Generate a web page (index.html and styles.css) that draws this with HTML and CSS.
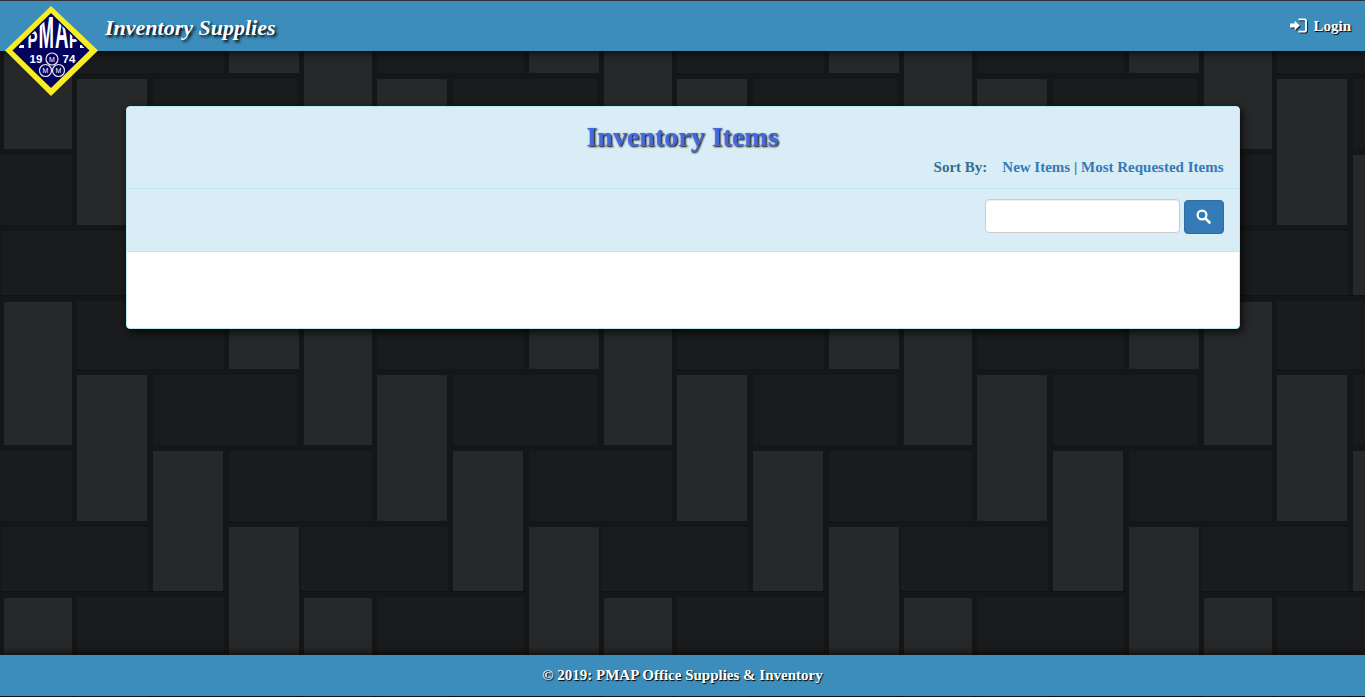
FILE: index.html
```html
<!DOCTYPE html>
<html lang="en">
<head>
  <meta charset="UTF-8" />
  <meta name="viewport" content="width=device-width, initial-scale=1.0"/>
  <title>Inventory Supplies</title>
  <link rel="stylesheet" href="styles.css">
</head>
<body>

<header class="topbar">
  <svg class="logo" width="94" height="92" viewBox="4 5 94 92" role="img" aria-label="PMAP 1974">
    <defs>
      <clipPath id="logoInner"><path d="M51 15 L87 50.5 L51 86 L15 50.5 Z"/></clipPath>
    </defs>
    <path d="M51 6 L98 50.5 L51 96 L5 50.5 Z" fill="#f6ee22"/>
    <path d="M51 13 L89.5 50.5 L51 88 L12.5 50.5 Z" fill="#03035e"/>
    <g clip-path="url(#logoInner)">
      <text class="logo-big" x="27.5" y="48" font-size="24" textLength="10" lengthAdjust="spacingAndGlyphs">P</text>
      <text class="logo-big" x="38.5" y="48" font-size="44" textLength="15.5" lengthAdjust="spacingAndGlyphs">M</text>
      <text class="logo-big" x="55" y="48" font-size="44" textLength="13.5" lengthAdjust="spacingAndGlyphs">A</text>
      <text class="logo-big" x="69" y="48" font-size="24" textLength="10" lengthAdjust="spacingAndGlyphs">P</text>
      <rect x="19" y="45" width="5" height="3" fill="#fff"/>
      <rect x="80" y="45" width="4" height="3" fill="#fff"/>
    </g>
    <text class="logo-year" x="29.5" y="63">19</text>
    <text class="logo-year" x="62.5" y="63">74</text>
    <g class="logo-rings">
      <circle cx="52" cy="59" r="6"/>
      <circle cx="45.5" cy="70.5" r="6"/>
      <circle cx="58.5" cy="70.5" r="6"/>
    </g>
    <text class="logo-m" x="52" y="61.5">M</text>
    <text class="logo-m" x="45.5" y="73">M</text>
    <text class="logo-m" x="58.5" y="73">M</text>
  </svg>
  <a class="brand" href="#">Inventory Supplies</a>
  <a class="login" href="#">
    <svg width="17" height="15" viewBox="0 0 18 15" aria-hidden="true">
      <path d="M0 5.5h5V2.5l5.5 5-5.5 5V9.5H0z" fill="#fff"/>
      <path d="M9 1h6a2 2 0 0 1 2 2v9a2 2 0 0 1-2 2H9" fill="none" stroke="#fff" stroke-width="2"/>
    </svg>
    Login
  </a>
</header>

<main class="content">
  <section class="panel">
    <div class="panel-top">
      <h2>Inventory Items</h2>
      <div class="sort-row">
        <span class="sort-label">Sort By:</span>
        <span class="sort-links"><a href="#">New Items</a> | <a href="#">Most Requested Items</a></span>
      </div>
    </div>
    <form class="panel-search">
      <input type="text" class="search-input" />
      <button type="submit" class="search-btn" aria-label="Search">
        <svg width="15" height="15" viewBox="0 0 15 15" aria-hidden="true">
          <circle cx="6" cy="6" r="4.4" fill="none" stroke="#fff" stroke-width="2.2"/>
          <path d="M9.3 9.3 L13.5 13.5" stroke="#fff" stroke-width="2.6" stroke-linecap="round"/>
        </svg>
      </button>
    </form>
    <div class="panel-body"></div>
  </section>
</main>

<footer class="bottombar">© 2019: PMAP Office Supplies &amp; Inventory</footer>

</body>
</html>
```

FILE: styles.css
```css
html, body {
  height: 100%;
}

body {
  margin: 0;
  min-height: 697px;
  box-sizing: border-box;
  display: flex;
  flex-direction: column;
  padding-bottom: 1px;
  font-family: "Liberation Serif", "Times New Roman", serif;
  font-size: 15px;
  background-color: #151617;
  background-image: url("data:image/svg+xml,%3Csvg xmlns='http://www.w3.org/2000/svg' width='300' height='296'%3E%3Cdefs%3E%3Cfilter id='b' color-interpolation-filters='sRGB'%3E%3CfeGaussianBlur stdDeviation='0.5'/%3E%3C/filter%3E%3C/defs%3E%3Crect width='300' height='296' fill='%23151617'/%3E%3Crect x='0' y='295' width='300' height='1' fill='%23101112'/%3E%3Cg filter='url(%23b)'%3E%3Cg fill='%231a1b1d'%3E%3Crect x='153' y='79' width='144' height='70'/%3E%3Crect x='229' y='155' width='143' height='70'/%3E%3Crect x='-71' y='155' width='143' height='70'/%3E%3Crect x='1' y='231' width='147' height='64'/%3E%3Crect x='77' y='5' width='147' height='68'/%3E%3C/g%3E%3Cg fill='%2327282a'%3E%3Crect x='4' y='6' width='68' height='143'/%3E%3Crect x='77' y='79' width='70' height='146'/%3E%3Crect x='153' y='155' width='70' height='140'/%3E%3Crect x='229' y='231' width='70' height='70'/%3E%3Crect x='229' y='-5' width='70' height='78'/%3E%3C/g%3E%3C/g%3E%3C/svg%3E");
  background-size: 300px 296px;
}

a {
  text-decoration: none;
}

.topbar {
  position: relative;
  display: flex;
  align-items: center;
  justify-content: space-between;
  height: 50px;
  padding: 0 14px 0 105px;
  background: #3c8dbc;
  border-top: 1px solid #333;
  box-shadow: 0 0 10px #000;
  z-index: 2;
}

.logo {
  position: absolute;
  left: 4px;
  top: 4px;
}

.logo text {
  font-family: "Liberation Sans", Arial, sans-serif;
  font-weight: bold;
  fill: #fff;
}

.logo-year {
  font-size: 11.5px;
}

.logo-rings circle {
  fill: #03035e;
  stroke: #e9e9f2;
  stroke-width: 1.2;
}

.logo .logo-m {
  font-size: 7px;
  text-anchor: middle;
  font-weight: normal;
}

.brand {
  margin-top: 4px;
  color: #fff;
  font-size: 22px;
  font-style: italic;
  font-weight: bold;
  text-shadow: 2px 2px 3px #000;
}

.login {
  display: flex;
  align-items: center;
  gap: 6px;
  color: #fff;
  font-weight: bold;
  text-shadow: 1px 1px 1px #000;
}

.login svg {
  margin-top: -1px;
  filter: drop-shadow(1px 1px 0 #222);
}

.content {
  flex: 1;
  padding-top: 55px;
}

.panel {
  width: 1114px;
  box-sizing: border-box;
  margin: 0 auto;
  background: #fff;
  border: 1px solid #bce8f1;
  border-radius: 4px;
  box-shadow: 2px 3px 8px rgba(0, 0, 0, 0.8);
  overflow: hidden;
}

.panel-top {
  height: 82px;
  box-sizing: border-box;
  padding: 14px 15px 0;
  background: #d9edf7;
  border-bottom: 1px solid #bce8f1;
}

.panel-top h2 {
  margin: 0;
  text-align: center;
  font-size: 28px;
  line-height: 32px;
  color: #4169e1;
  text-shadow: 1px 1px 2px #000;
}

.sort-row {
  display: flex;
  justify-content: flex-end;
  gap: 15px;
  margin-top: 4px;
  font-weight: bold;
  color: #31708f;
  line-height: 20px;
}

.sort-links a {
  color: #337ab7;
}

.panel-search {
  display: flex;
  justify-content: flex-end;
  align-items: flex-start;
  gap: 4px;
  height: 63px;
  box-sizing: border-box;
  margin: 0;
  padding: 10px 15px 0;
  background: #d9edf7;
  border-bottom: 1px solid #bce8f1;
}

.search-input {
  width: 195px;
  height: 34px;
  box-sizing: border-box;
  padding: 6px 12px;
  background: #fff;
  border: 1px solid #ccc;
  border-radius: 4px;
  box-shadow: inset 0 1px 1px rgba(0, 0, 0, 0.075);
}

.search-btn {
  display: flex;
  align-items: center;
  justify-content: center;
  width: 40px;
  height: 34px;
  margin-top: 1px;
  padding: 0 0 2px;
  background: #337ab7;
  border: 1px solid #2e6da4;
  border-radius: 4px;
}

.panel-body {
  height: 76px;
}

.bottombar {
  position: relative;
  height: 41px;
  line-height: 41px;
  text-align: center;
  background: #3c8dbc;
  color: #fff;
  font-weight: bold;
  text-shadow: 1px 1px 1px #000;
  box-shadow: 0 0 10px #000;
}
```
